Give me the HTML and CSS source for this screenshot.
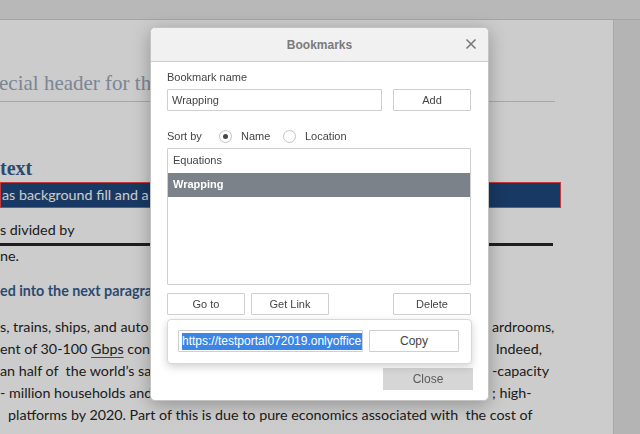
FILE: index.html
```html
<!DOCTYPE html>
<html>
<head>
<meta charset="utf-8">
<title>Bookmarks</title>
<link rel="stylesheet" href="styles.css">
</head>
<body>
<div class="editor">
  <div class="topbar"></div>
  <div class="workspace">
    <div class="page">
      <div class="doc-header clip">ecial header for this document</div>
      <div class="doc-hr"></div>
      <div class="doc-h1">text</div>
      <div class="doc-band"><span class="clip">as background fill and a border around the paragraph text</span></div>
      <div class="doc-line divided">s divided by</div>
      <div class="doc-rule"></div>
      <div class="doc-line ne">ne.</div>
      <div class="doc-h2 clip">ed into the next paragraph</div>
      <div class="para">
        <div class="pline"><span class="pl">s, trains, ships, and auto</span><span class="pr">ardrooms,</span></div>
        <div class="pline"><span class="pl">ent of 30-100 <span class="spell">Gbps</span> conn</span><span class="pr">&nbsp;Indeed,</span></div>
        <div class="pline"><span class="pl">an half of &nbsp;the world’s sa</span><span class="pr">-capacity</span></div>
        <div class="pline"><span class="pl">- million households and</span><span class="pr">; high-</span></div>
        <div class="pline last">platforms by 2020. Part of this is due to pure economics associated with &nbsp;the cost of</div>
      </div>
    </div>
  </div>
</div>

<div class="backdrop"></div>

<div class="dialog">
  <div class="dlg-header">
    <span class="dlg-title">Bookmarks</span>
    <svg class="dlg-close" width="12" height="12" viewBox="0 0 12 12"><path d="M1.5 1.5 L10.5 10.5 M10.5 1.5 L1.5 10.5" stroke="#7a7a7a" stroke-width="1.6" fill="none"/></svg>
  </div>
  <div class="dlg-body">
    <div class="label">Bookmark name</div>
    <div class="row name-row">
      <div class="input name-input">Wrapping</div>
      <div class="btn btn-add">Add</div>
    </div>
    <div class="sort-row">
      <span class="sort-label">Sort by</span>
      <span class="radio checked"></span>
      <span class="radio-text">Name</span>
      <span class="radio"></span>
      <span class="radio-text">Location</span>
    </div>
    <div class="list">
      <div class="item">Equations</div>
      <div class="item selected">Wrapping</div>
    </div>
    <div class="row btn-row">
      <div class="btn btn-goto">Go to</div>
      <div class="btn btn-link">Get Link</div>
      <div class="btn btn-delete">Delete</div>
    </div>
    <div class="footer">
      <div class="btn-close">Close</div>
    </div>
  </div>
  <div class="link-popup">
    <div class="input link-input"><span class="sel">https://testportal072019.onlyoffice.com/Products/Files/DocEditor.aspx</span></div>
    <div class="btn btn-copy">Copy</div>
  </div>
</div>
</body>
</html>
```

FILE: styles.css
```css
* { box-sizing: border-box; }
html, body {
  margin: 0;
  padding: 0;
  width: 640px;
  height: 434px;
  overflow: hidden;
}
body {
  background: #e1e1e1;
  font-family: "Liberation Sans", Arial, sans-serif;
}
.editor {
  width: 640px;
  height: 434px;
  display: flex;
  flex-direction: column;
}
.topbar {
  height: 20px;
  background: #e7e7e7;
  border-bottom: 1px solid #cdcdcd;
  flex: none;
}
.workspace {
  flex: 1;
  display: flex;
  overflow: hidden;
}
.page {
  width: 614px;
  background: #ffffff;
  border-right: 1px solid #d2d2d2;
  overflow: hidden;
  padding-top: 51px;
  white-space: nowrap;
  color: #262626;
}
.clip {
  display: block;
  width: 156px;
  overflow: hidden;
}
.doc-header {
  font-family: "Liberation Serif", serif;
  font-size: 21px;
  line-height: 24px;
  color: #9aa8bb;
  margin-left: -1px;
}
.doc-hr {
  width: 555px;
  height: 1px;
  background: #c5d5ea;
  margin-top: 6px;
}
.doc-h1 {
  font-family: "Liberation Serif", serif;
  font-weight: bold;
  font-size: 20px;
  line-height: 24px;
  color: #365d8c;
  margin-top: 54px;
}
.doc-band {
  width: 561px;
  height: 26px;
  margin-top: 2px;
  background: #1f487c;
  border: 1px solid #ef4a4c;
  color: #ffffff;
  font-family: Lato, "Liberation Sans", sans-serif;
  font-size: 14.3px;
  line-height: 24px;
  padding-left: 1px;
  overflow: hidden;
}
.doc-line {
  font-family: Lato, "Liberation Sans", sans-serif;
  font-size: 14.3px;
  line-height: 22px;
}
.divided { margin-top: 11px; }
.doc-rule {
  width: 553px;
  height: 3px;
  background: #262626;
  margin-top: 2px;
}
.ne { line-height: 20px; }
.doc-h2 {
  font-family: Lato, "Liberation Sans", sans-serif;
  font-weight: bold;
  font-size: 14.3px;
  line-height: 22px;
  color: #365d8c;
  margin-top: 14px;
}
.para {
  margin-top: 14px;
  font-family: Lato, "Liberation Sans", sans-serif;
  font-size: 14.3px;
  line-height: 22px;
}
.pline {
  display: grid;
  grid-template-columns: 156px 336px auto;
}
.pl { overflow: hidden; }
.pr { grid-column: 3; }
.pline.last {
  display: block;
  padding-left: 8px;
}
.spell {
  text-decoration: underline;
  text-decoration-color: #d42a2a;
  text-underline-offset: 3px;
}

.backdrop {
  position: fixed;
  inset: 0;
  background: rgba(0, 0, 0, 0.2);
}

.dialog {
  position: absolute;
  left: 150px;
  top: 27px;
  width: 339px;
  height: 374px;
  background: #ffffff;
  border: 1px solid #c4c4c4;
  border-radius: 5px;
  box-shadow: 0 4px 18px rgba(0, 0, 0, 0.28);
  font-size: 11px;
  color: #444444;
}
.dlg-header {
  height: 34px;
  background: #f1f1f1;
  border-bottom: 1px solid #cbcbcb;
  border-radius: 5px 5px 0 0;
  display: flex;
  align-items: center;
  justify-content: center;
  position: relative;
}
.dlg-title {
  font-size: 12px;
  font-weight: bold;
  color: #7b7b7b;
}
.dlg-close {
  position: absolute;
  right: 11px;
  top: 10px;
}
.dlg-body {
  padding: 8px 17px 0 16px;
}
.label {
  line-height: 14px;
}
.row {
  display: flex;
  align-items: stretch;
}
.name-row {
  margin-top: 5px;
  height: 22px;
}
.input {
  height: 22px;
  border: 1px solid #cfcfcf;
  border-radius: 1px;
  line-height: 20px;
  padding-left: 4px;
  color: #444444;
  background: #ffffff;
  overflow: hidden;
  white-space: nowrap;
}
.name-input { width: 215px; }
.btn {
  height: 22px;
  border: 1px solid #cfcfcf;
  border-radius: 1px;
  background: #ffffff;
  text-align: center;
  line-height: 20px;
  color: #444444;
}
.btn-add {
  width: 78px;
  margin-left: auto;
}
.sort-row {
  margin-top: 17px;
  height: 16px;
  display: flex;
  align-items: center;
}
.sort-label { width: 52px; }
.radio {
  width: 13px;
  height: 13px;
  border: 1px solid #c4c4c4;
  border-radius: 50%;
  display: flex;
  align-items: center;
  justify-content: center;
  margin-right: 9px;
}
.radio.checked::after {
  content: "";
  width: 5px;
  height: 5px;
  border-radius: 50%;
  background: #444444;
}
.radio-text { width: 42px; }
.list {
  margin-top: 4px;
  height: 137px;
  border: 1px solid #cfcfcf;
  border-radius: 1px;
}
.item {
  height: 24px;
  line-height: 23px;
  padding-left: 5px;
  font-size: 11px;
  color: #444444;
}
.item.selected {
  background: #7c8289;
  color: #ffffff;
  font-weight: bold;
}
.btn-row {
  margin-top: 8px;
  height: 22px;
}
.btn-goto { width: 78px; }
.btn-link { width: 78px; margin-left: 6px; }
.btn-delete { width: 78px; margin-left: auto; }
.footer {
  margin-top: 53px;
  display: flex;
  justify-content: flex-end;
  margin-right: -2px;
}
.btn-close {
  width: 90px;
  height: 22px;
  background: #d6d6d6;
  color: #5a5a5a;
  text-align: center;
  line-height: 22px;
  font-size: 12px;
}
.link-popup {
  position: absolute;
  left: 16px;
  top: 291px;
  width: 305px;
  height: 45px;
  background: #ffffff;
  border: 1px solid #d8d8d8;
  border-radius: 4px;
  box-shadow: 0 3px 8px rgba(0, 0, 0, 0.18);
  padding: 10px 0 0 10px;
  display: flex;
  align-items: flex-start;
}
.link-input {
  width: 185px;
  padding-left: 3px;
  font-size: 12px;
}
.sel {
  background: #3b86e4;
  color: #ffffff;
  padding: 1px 0 2px;
}
.btn-copy {
  width: 90px;
  margin-left: 6px;
  font-size: 12px;
}
```
